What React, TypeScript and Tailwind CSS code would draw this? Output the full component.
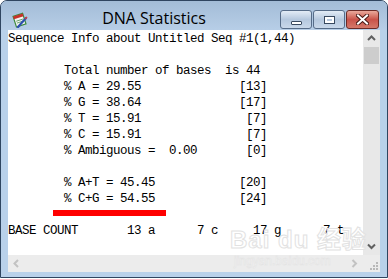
import React from 'react';

const lines: string[] = [
  'Sequence Info about Untitled Seq #1(1,44)',
  '',
  '        Total number of bases  is 44',
  '        % A = 29.55              [13]',
  '        % G = 38.64              [17]',
  '        % T = 15.91               [7]',
  '        % C = 15.91               [7]',
  '        % Ambiguous =  0.00       [0]',
  '',
  '        % A+T = 45.45            [20]',
  '        % C+G = 54.55            [24]',
];

function AppIcon() {
  return (
    <svg width="16" height="16" viewBox="0 0 16 16">
      <g transform="rotate(-18 8 8)">
        <rect x="2.5" y="2.5" width="10" height="11" fill="#f4f4f4" stroke="#3d8a3d" strokeWidth="1.2" />
        <rect x="2.5" y="2.5" width="10" height="3" fill="#c8312b" />
        <path d="M4 8h7M4 10h6" stroke="#5a9a5a" strokeWidth="0.8" />
      </g>
      <path d="M6 15 L14 6" stroke="#2c4fb0" strokeWidth="2.2" strokeLinecap="round" />
      <path d="M13 7 L15 5" stroke="#d04040" strokeWidth="1.6" />
    </svg>
  );
}

function CaptionButton({ kind }: { kind: 'min' | 'max' | 'close' }) {
  const isClose = kind === 'close';
  return (
    <div
      className={
        'flex h-[19px] items-center justify-center rounded-[3px] border ' +
        (isClose
          ? 'w-[33px] border-[#6b2b27] bg-gradient-to-b from-[#e9a99c] via-[#c9534a] to-[#d4786a]'
          : 'w-[32px] border-[#566c88] bg-gradient-to-b from-[#e3ecf6] via-[#b5c8de] to-[#c9d8ea]')
      }
    >
      {kind === 'min' && (
        <div className="mt-[6px] h-[4px] w-[11px] rounded-[1px] border border-[#38495f] bg-white" />
      )}
      {kind === 'max' && (
        <div className="h-[8px] w-[11px] border border-[#38495f] bg-transparent">
          <div className="h-full w-full border-[2px] border-white border-t-[2px]" />
        </div>
      )}
      {isClose && (
        <svg width="13" height="11" viewBox="0 0 13 11">
          <path d="M2 1.5 L11 9.5 M11 1.5 L2 9.5" stroke="#4a1a16" strokeWidth="4" strokeLinecap="square" />
          <path d="M2 1.5 L11 9.5 M11 1.5 L2 9.5" stroke="#ffffff" strokeWidth="2" strokeLinecap="square" />
        </svg>
      )}
    </div>
  );
}

function Chevron({ dir, color }: { dir: 'up' | 'down' | 'left' | 'right'; color: string }) {
  const d = {
    up: 'M1 5 L4.5 1.5 L8 5',
    down: 'M1 1.5 L4.5 5 L8 1.5',
    left: 'M5 1 L1.5 4.5 L5 8',
    right: 'M1.5 1 L5 4.5 L1.5 8',
  }[dir];
  const vertical = dir === 'up' || dir === 'down';
  return (
    <svg width={vertical ? 9 : 7} height={vertical ? 7 : 9} viewBox={vertical ? '0 0 9 7' : '0 0 7 9'}>
      <path d={d} fill="none" stroke={color} strokeWidth="2" />
    </svg>
  );
}

function Grip() {
  return (
    <svg width="10" height="10" viewBox="0 0 10 10">
      {[
        [8, 2],
        [5, 5],
        [8, 5],
        [2, 8],
        [5, 8],
        [8, 8],
      ].map(([x, y]) => (
        <rect key={`${x}-${y}`} x={x} y={y} width="2" height="2" fill="#b8b8b8" />
      ))}
    </svg>
  );
}

export default function App() {
  const mono = { fontFamily: '"Liberation Mono", "Courier New", monospace' };

  return (
    <div className="h-[279px] w-[388px] bg-white">
      <div className="flex h-[278px] w-[388px] flex-col overflow-hidden rounded-t-[7px] border border-[#2f4560] bg-[#b9d1ea]">
        {/* Title bar */}
        <div className="flex h-[29px] items-start bg-gradient-to-b from-[#a3bcd7] to-[#b7cee7]">
          <div className="ml-[11px] mt-[11px]">
            <AppIcon />
          </div>
          <div
            className="mt-[7px] flex-1 text-center text-[16px] leading-[20px] text-black"
            style={{ fontFamily: '"Open Sans", "Noto Sans", sans-serif' }}
          >
            DNA Statistics
          </div>
          <div className="mr-[8px] mt-[9px] flex gap-[1px]">
            <CaptionButton kind="min" />
            <CaptionButton kind="max" />
            <CaptionButton kind="close" />
          </div>
        </div>

        {/* Client area */}
        <div className="flex flex-1 px-[7px] pb-[5px]">
          <div className="relative grid h-[242px] w-[372px] grid-cols-[355px_17px] grid-rows-[225px_17px] bg-white">
            <div
              className="overflow-hidden whitespace-pre pt-[1px] text-[12.5px] leading-[16px] tracking-[-0.5px] text-black"
              style={mono}
            >
              {lines.map((l, i) => (
                <div key={i} className="h-[16px]">
                  {l}
                </div>
              ))}
              <div className="h-[16px] pt-[3px]">
                <div className="ml-[45px] h-[6px] w-[113px] bg-[#ff0000]" />
              </div>
              <div className="h-[16px]">{'BASE COUNT       13 a      7 c     17 g      7 t'}</div>
            </div>

            {/* Vertical scrollbar */}
            <div className="flex flex-col bg-[#e8e8e8]">
              <div className="flex h-[17px] items-center justify-center">
                <Chevron dir="up" color="#606060" />
              </div>
              <div className="mx-[1px] h-[17px] bg-[#cdcdcd]" />
              <div className="flex-1" />
              <div className="flex h-[17px] items-center justify-center">
                <Chevron dir="down" color="#606060" />
              </div>
            </div>

            {/* Horizontal scrollbar */}
            <div className="flex items-center justify-between bg-[#ececec]">
              <div className="flex w-[17px] justify-center">
                <Chevron dir="left" color="#c2c2c2" />
              </div>
              <div className="flex w-[17px] justify-center">
                <Chevron dir="right" color="#c2c2c2" />
              </div>
            </div>
            <div className="flex items-end justify-end bg-[#ececec] p-[2px]">
              <Grip />
            </div>

            {/* Watermark */}
            <div className="pointer-events-none absolute left-[222px] top-[196px] flex flex-col items-start">
              <div
                className="text-[24px] font-bold leading-[28px] tracking-[1px]"
                style={{ fontFamily: '"Liberation Sans", Arial, "Noto Sans CJK SC", sans-serif', WebkitTextStroke: '1px #e2e2e2', color: 'rgba(255,255,255,0.6)' }}
              >
                Bai du 经验
              </div>
              <div
                className="ml-[4px] text-[12px] leading-[14px]"
                style={{ fontFamily: '"Liberation Sans", Arial, sans-serif', WebkitTextStroke: '0.5px #e2e2e2', color: 'rgba(255,255,255,0.6)' }}
              >
                jingyan.baidu.com
              </div>
            </div>
          </div>
        </div>
      </div>
    </div>
  );
}
